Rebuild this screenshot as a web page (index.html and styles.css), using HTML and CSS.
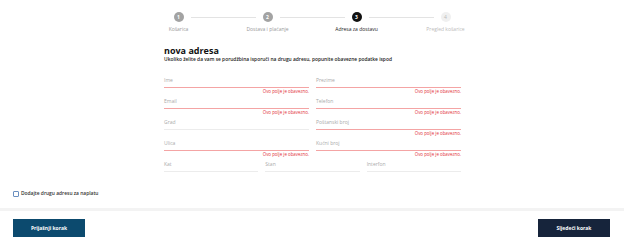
FILE: index.html
```html
<!DOCTYPE html>
<html lang="sr">
<head>
    <meta charset="UTF-8">
    <title>Adresa za dostavu</title>
    <link rel="stylesheet" href="styles.css">
</head>
<body>
    <div class="stepper">
        <div class="step done"><span class="dot">1</span><span class="step-label">Košarica</span></div>
        <div class="step done"><span class="dot">2</span><span class="step-label">Dostava i plaćanje</span></div>
        <div class="step active"><span class="dot">3</span><span class="step-label">Adresa za dostavu</span></div>
        <div class="step todo"><span class="dot">4</span><span class="step-label">Pregled košarice</span></div>
    </div>

    <div class="form-wrap">
        <h1>nova adresa</h1>
        <p class="description">Ukoliko želite da vam se porudžbina isporuči na drugu adresu, popunite obavezne podatke ispod</p>

        <div class="grid two">
            <div class="field error"><div class="input">Ime</div><div class="msg">Ovo polje je obavezno.</div></div>
            <div class="field error"><div class="input">Prezime</div><div class="msg">Ovo polje je obavezno.</div></div>
            <div class="field error"><div class="input">Email</div><div class="msg">Ovo polje je obavezno.</div></div>
            <div class="field error"><div class="input">Telefon</div><div class="msg">Ovo polje je obavezno.</div></div>
            <div class="field"><div class="input">Grad</div><div class="msg"></div></div>
            <div class="field error"><div class="input">Poštanski broj</div><div class="msg">Ovo polje je obavezno.</div></div>
            <div class="field error"><div class="input">Ulica</div><div class="msg">Ovo polje je obavezno.</div></div>
            <div class="field error"><div class="input">Kućni broj</div><div class="msg">Ovo polje je obavezno.</div></div>
        </div>
        <div class="grid three">
            <div class="field"><div class="input">Kat</div><div class="msg"></div></div>
            <div class="field"><div class="input">Stan</div><div class="msg"></div></div>
            <div class="field"><div class="input">Interfon</div><div class="msg"></div></div>
        </div>
    </div>

    <label class="check"><span class="box"></span>Dodajte drugu adresu za naplatu</label>

    <div class="divider"></div>

    <div class="actions">
        <button class="btn btn-prev">Prijašnji korak</button>
        <button class="btn btn-next">Sljedeći korak</button>
    </div>
</body>
</html>
```

FILE: styles.css
```css
* {
    margin: 0;
    padding: 0;
    box-sizing: border-box;
}

body {
    font-family: "Open Sans", "Noto Sans", sans-serif;
    background: #fff;
    color: #1a1a1a;
    width: 624px;
    height: 240px;
    overflow: hidden;
}

/* koraci */
.stepper {
    display: flex;
    width: 356px;
    margin: 0 auto;
    padding-top: 12px;
}

.step {
    flex: 1;
    display: flex;
    flex-direction: column;
    align-items: center;
    position: relative;
}

.step + .step::before {
    content: "";
    position: absolute;
    top: 5px;
    left: calc(-50% + 12px);
    right: calc(50% + 12px);
    height: 1px;
    background: #e3e3e3;
}

.dot {
    width: 10px;
    height: 10px;
    border-radius: 50%;
    font-size: 5px;
    font-weight: 700;
    line-height: 10px;
    text-align: center;
    color: #fff;
}

.step.done .dot { background: #a3a3a3; }
.step.active .dot { background: #111; }
.step.todo .dot { background: #f0f0f0; color: #bbb; font-weight: 400; }

.step-label {
    margin-top: 4px;
    font-size: 5px;
    line-height: 7px;
    color: #999;
}

.step.active .step-label { color: #222; }
.step.todo .step-label { color: #bbb; }

/* forma */
.form-wrap {
    width: 297px;
    margin: 0 0 0 164px;
    padding-top: 12px;
}

h1 {
    font-size: 9px;
    line-height: 11px;
    font-weight: 700;
    color: #111;
}

.description {
    font-size: 4.9px;
    line-height: 7px;
    font-weight: 600;
    color: #222;
    margin-bottom: 11px;
}

.grid {
    display: grid;
}

.grid.two {
    grid-template-columns: 1fr 1fr;
    column-gap: 7px;
}

.grid.three {
    grid-template-columns: 1fr 1fr 1fr;
    column-gap: 7px;
}

.field {
    height: 21px;
}

.input {
    height: 14px;
    padding-top: 3px;
    font-size: 5px;
    line-height: 7px;
    color: #aaa;
    border-bottom: 1px solid #ececec;
}

.field.error .input {
    border-bottom-color: #f4a4a4;
}

.msg {
    text-align: right;
    font-size: 4.4px;
    line-height: 7px;
    color: #e2303a;
}

/* checkbox */
.check {
    display: flex;
    align-items: center;
    gap: 2px;
    margin: 11px 0 0 13px;
    font-size: 4.9px;
    line-height: 7px;
    font-weight: 600;
    color: #333;
}

.box {
    width: 6px;
    height: 6px;
    border: 1px solid #6a8fc0;
    border-radius: 1px;
}

.divider {
    height: 3px;
    margin-top: 11px;
    background: #f3f3f3;
}

.actions {
    display: flex;
    justify-content: space-between;
    padding: 8px 14px 0 13px;
}

.btn {
    width: 72px;
    height: 18px;
    border: none;
    color: #fff;
    font-family: inherit;
    font-size: 5px;
    font-weight: 700;
}

.btn-prev { background: #0c4a6e; }
.btn-next { background: #16243b; }
```
